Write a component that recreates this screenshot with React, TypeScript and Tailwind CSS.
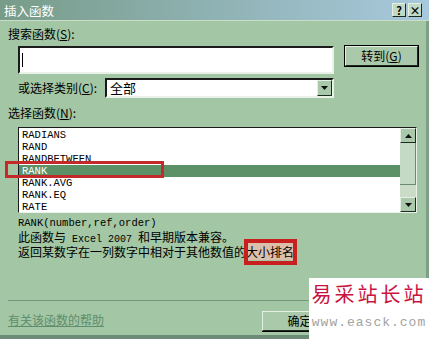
import React from "react";

const funcs = ["RADIANS", "RAND", "RANDBETWEEN", "RANK", "RANK.AVG", "RANK.EQ", "RATE"];

const cjk = { fontFamily: '"Noto Sans CJK SC", "Noto Sans", sans-serif' };
const mono = { fontFamily: '"Liberation Mono", "Noto Sans CJK SC", monospace' };

function Bevel({ children, className = "" }: { children?: React.ReactNode; className?: string }) {
  return (
    <div
      className={`flex items-center justify-center border border-t-[#e4f0e4] border-l-[#e4f0e4] border-b-[#1d2a1f] border-r-[#1d2a1f] bg-[#a9c9aa] ${className}`}
    >
      {children}
    </div>
  );
}

function Arrow({ up }: { up?: boolean }) {
  return (
    <svg width="7" height="4" viewBox="0 0 7 4">
      <path d={up ? "M0 4 L3.5 0 L7 4 Z" : "M0 0 L7 0 L3.5 4 Z"} fill="#111" />
    </svg>
  );
}

export default function App() {
  return (
    <div
      className="relative flex h-[339px] w-[429px] flex-col overflow-hidden bg-[#a3c6a4] text-[12px] leading-[12px] text-black"
      style={cjk}
    >
      {/* Title bar */}
      <div className="flex h-[20px] shrink-0 items-center justify-between bg-gradient-to-r from-[#789c88] via-[#8fb2b4] to-[#a8c9dd] pl-[4px] pr-[7px]">
        <span className="text-[12.5px] leading-[13px] text-white">插入函数</span>
        <div className="flex gap-[2px]">
          <Bevel className="h-[14px] w-[14px] bg-[#c2d9c4] text-[11px] font-bold leading-none">?</Bevel>
          <Bevel className="h-[14px] w-[14px] bg-[#c2d9c4] text-[11px] font-bold leading-none">×</Bevel>
        </div>
      </div>
      <div className="h-px bg-[#c9ddc9]" />

      <div className="flex flex-1 flex-col border-r-[3px] border-[#7f9e88] pl-[8px]">
        <div className="mt-[7px]">搜索函数(<span className="underline">S</span>):</div>

        <div className="mt-[6px] flex items-start">
          <div className="ml-[10px] flex h-[28px] w-[316px] items-center border-2 border-t-[#1b1b1b] border-l-[#1b1b1b] border-b-[#e9f1e9] border-r-[#e9f1e9] bg-white pl-[2px]">
            <div className="h-[14px] w-px bg-black" />
          </div>
          <div className="-mt-[1px] ml-[10px] border border-black">
            <Bevel className="h-[20px] w-[73px] bg-[#a3c6a4]">
              转到(<span className="underline">G</span>)
            </Bevel>
          </div>
        </div>

        <div className="mt-[4px] flex items-center">
          <span className="ml-[10px] w-[87px]">或选择类别(<span className="underline">C</span>):</span>
          <div className="flex h-[20px] w-[229px] items-center border-2 border-t-[#1b1b1b] border-l-[#1b1b1b] border-b-[#e9f1e9] border-r-[#e9f1e9] bg-white">
            <span className="flex-1 pl-[3px] text-[13px]">全部</span>
            <Bevel className="h-[16px] w-[15px] bg-[#9dbd9e]">
              <Arrow />
            </Bevel>
          </div>
        </div>

        <div className="mt-[9px]">选择函数(<span className="underline">N</span>):</div>

        <div className="ml-[10px] mt-[8px] flex h-[86px] w-[399px] border border-t-[#1b1b1b] border-l-[#1b1b1b] border-b-[#e9f1e9] border-r-[#e9f1e9] bg-white">
          <div className="flex flex-1 flex-col pt-[1px]" style={mono}>
            {funcs.map((f) => (
              <div
                key={f}
                className={`h-[12px] pl-[3px] text-[10.5px] leading-[12px] ${
                  f === "RANK" ? "bg-[#5c9067] text-white" : ""
                }`}
              >
                {f}
              </div>
            ))}
          </div>
          <div className="flex w-[16px] flex-col bg-[#cadcc8]">
            <Bevel className="h-[15px] w-[16px]">
              <Arrow up />
            </Bevel>
            <div className="h-[42px] border-b border-r border-[#6d8a72] bg-[#c5dac4]" />
            <div className="flex-1" />
            <Bevel className="h-[15px] w-[16px]">
              <Arrow />
            </Bevel>
          </div>
        </div>

        <div className="ml-[10px] mt-[4px] text-[10.5px]" style={mono}>
          RANK(number,ref,order)
        </div>
        <div className="ml-[10px] mt-[2px] leading-[12px]">
          此函数与<span className="text-[10px]" style={mono}> Excel 2007 </span>和早期版本兼容。
        </div>
        <div className="ml-[10px] whitespace-nowrap leading-[12px]">
          返回某数字在一列数字中相对于其他数值的
          <span className="relative bg-[#dcbfab]">
            大小排名
            <span className="absolute -bottom-[5px] -left-[2px] -right-[3px] -top-[4px] border-[4px] border-[#c8201e]" />
          </span>
        </div>

        <div className="mr-[2px] mt-[42px] h-[2px] border-t border-[#75977d] border-b-[#c6dcc6]" />

        <div className="mt-[12px] flex items-start">
          <span className="text-[#5f8d6d] underline">有关该函数的帮助</span>
          <div className="-mt-[3px] ml-[158px] border-b border-r border-black">
            <Bevel className="h-[20px] w-[75px] bg-[#a3c6a4]">确定</Bevel>
          </div>
        </div>
      </div>
      <div className="h-[4px] shrink-0 bg-[#6e8b78]" />

      {/* annotation around the selected row */}
      <div className="absolute left-[5px] top-[161px] h-[17px] w-[159px] border-[3px] border-[#c42a29]" />

      {/* watermark */}
      <div className="absolute bottom-0 right-0 flex h-[61px] w-[120px] flex-col items-center bg-white pt-[5px]">
        <span className="text-[20px] leading-[22px] tracking-[3px] text-[#c81441]">易采站长站</span>
        <span className="mt-[11px] text-[13px] leading-[13px] tracking-[1px] text-[#a2a2a2]" style={mono}>
          www.easck.com
        </span>
      </div>
    </div>
  );
}
